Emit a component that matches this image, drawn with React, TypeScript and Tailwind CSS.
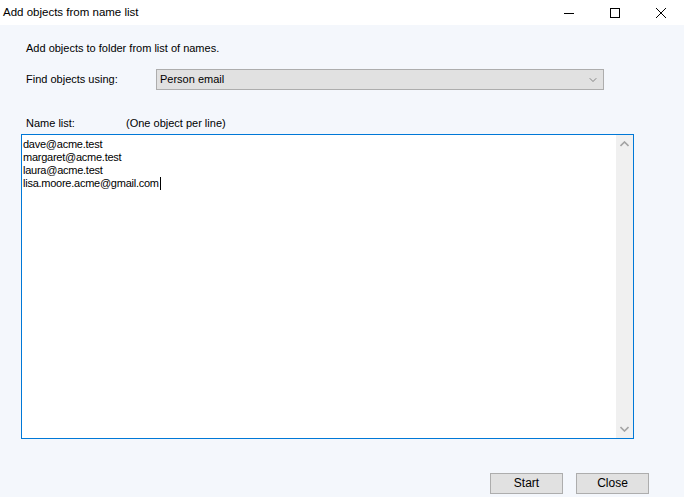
import { ChevronDown } from 'lucide-react'

const names = ['dave@acme.test', 'margaret@acme.test', 'laura@acme.test', 'lisa.moore.acme@gmail.com']

function TitleBar() {
  return (
    <div className="h-[25px] bg-white flex items-center justify-between">
      <span className="pl-[3px] text-[11.5px] text-black">Add objects from name list</span>
      <div className="flex items-center h-full">
        {/* minimize */}
        <div className="w-[46px] h-full flex items-center justify-center">
          <svg width="10" height="10" viewBox="0 0 10 10">
            <line x1="0" y1="5.5" x2="10" y2="5.5" stroke="#000" strokeWidth="1" />
          </svg>
        </div>
        {/* maximize */}
        <div className="w-[46px] h-full flex items-center justify-center">
          <svg width="10" height="10" viewBox="0 0 10 10">
            <rect x="0.5" y="0.5" width="9" height="9" fill="none" stroke="#000" strokeWidth="1" />
          </svg>
        </div>
        {/* close */}
        <div className="w-[46px] h-full flex items-center justify-center">
          <svg width="10" height="10" viewBox="0 0 10 10">
            <path d="M0 0 L10 10 M10 0 L0 10" stroke="#000" strokeWidth="1" />
          </svg>
        </div>
      </div>
    </div>
  )
}

function ScrollArrow({ up }: { up?: boolean }) {
  return (
    <svg width="9" height="6" viewBox="0 0 9 6">
      <path d={up ? 'M0.5 5 L4.5 1 L8.5 5' : 'M0.5 1 L4.5 5 L8.5 1'} fill="none" stroke="#a3a3a3" strokeWidth="1.6" />
    </svg>
  )
}

export default function App() {
  return (
    <div
      className="w-[684px] h-[497px] flex flex-col bg-[#f4f7fc] text-[11px] leading-[13px] text-black overflow-hidden"
      style={{ fontFamily: '"Liberation Sans", Arial, sans-serif' }}
    >
      <TitleBar />

      <div className="flex flex-col flex-1">
        <p className="pl-[26px] mt-[17px]">Add objects to folder from list of names.</p>

        <div className="flex items-center mt-[14px]">
          <span className="pl-[26px] w-[156px]">Find objects using:</span>
          <div className="w-[448px] h-[21px] bg-[#e1e1e1] border border-[#adadad] flex items-center justify-between pl-[3px] pr-[4px]">
            <span>Person email</span>
            <ChevronDown className="size-[12px] text-[#505050]" strokeWidth={1.3} />
          </div>
        </div>

        <div className="flex mt-[27px]">
          <span className="pl-[26px] w-[126px]">Name list:</span>
          <span>(One object per line)</span>
        </div>

        <div className="ml-[21px] mt-[4px] w-[613px] h-[305px] border border-[#0078d7] bg-white flex">
          <div className="flex-1 pl-[1px] pt-[3px] tracking-[-0.25px]">
            {names.map((n, i) => (
              <div key={n} className="flex items-center h-[13px]">
                <span>{n}</span>
                {i === names.length - 1 && <span className="w-px h-[13px] bg-black ml-[1px]" />}
              </div>
            ))}
          </div>
          <div className="w-[17px] bg-[#f0f0f0] flex flex-col justify-between items-center py-[6px]">
            <ScrollArrow up />
            <ScrollArrow />
          </div>
        </div>

        <div className="flex justify-end gap-[13px] pr-[35px] mt-[34px]">
          <button className="w-[73px] h-[21px] bg-[#e1e1e1] border border-[#adadad] text-[12px]">Start</button>
          <button className="w-[73px] h-[21px] bg-[#e1e1e1] border border-[#adadad] text-[12px]">Close</button>
        </div>
      </div>
    </div>
  )
}
